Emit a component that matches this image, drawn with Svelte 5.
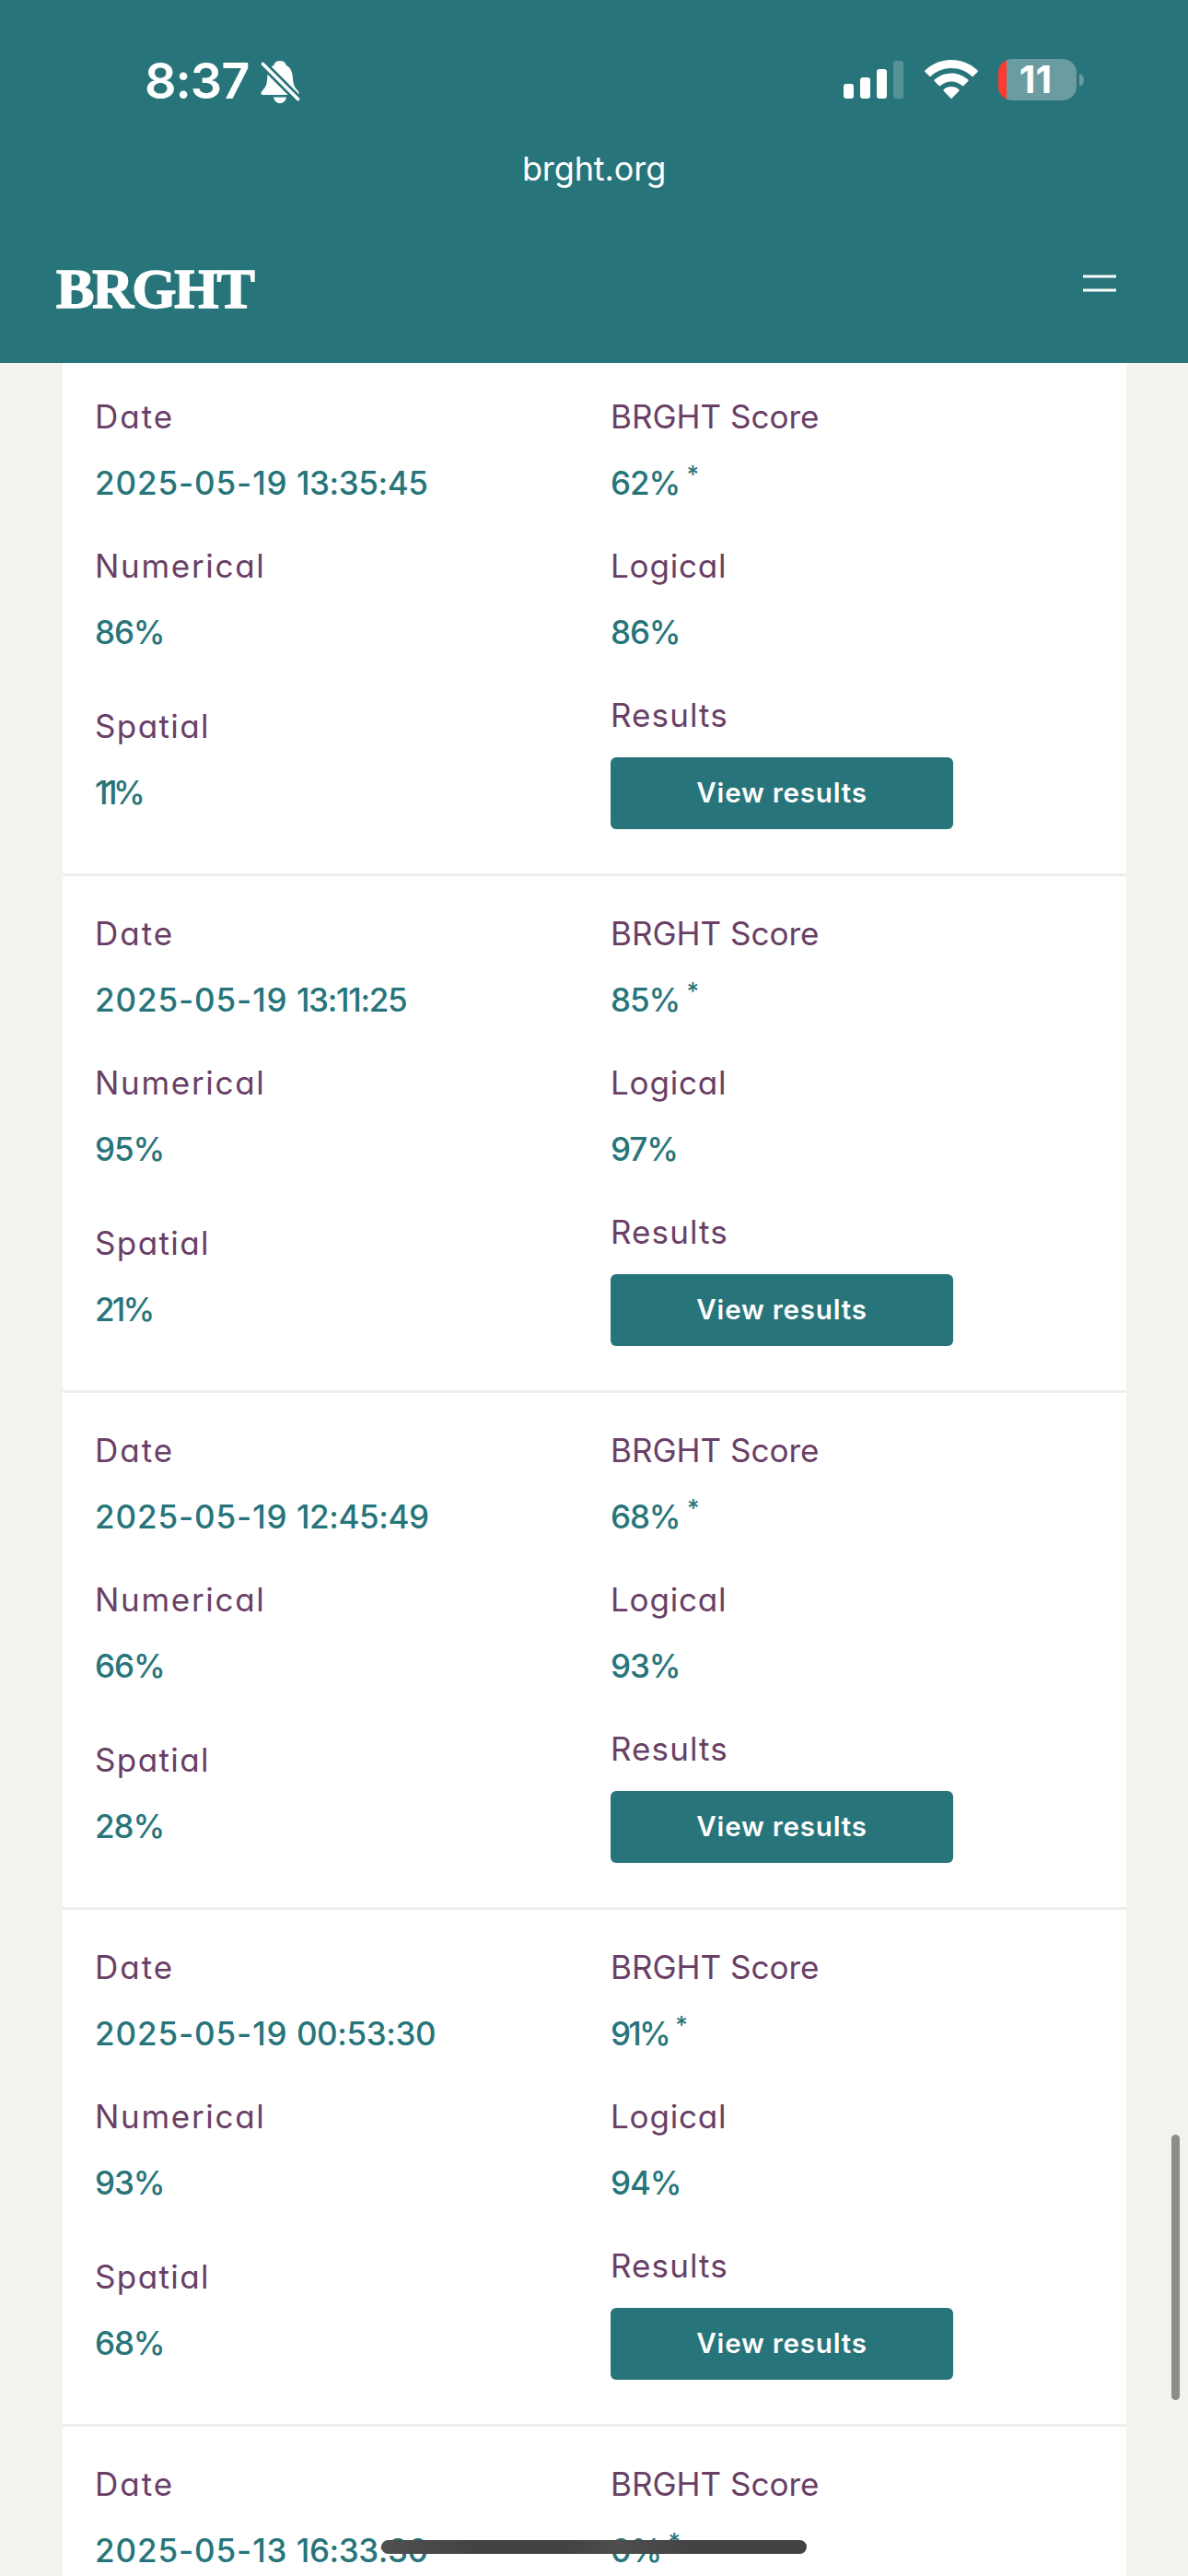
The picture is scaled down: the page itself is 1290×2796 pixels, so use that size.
<script lang="ts">
	const results = [
		{ date: '2025-05-19', time: '13:35:45', score: 62, numerical: 86, logical: 86, spatial: 11 },
		{ date: '2025-05-19', time: '13:11:25', score: 85, numerical: 95, logical: 97, spatial: 21 },
		{ date: '2025-05-19', time: '12:45:49', score: 68, numerical: 66, logical: 93, spatial: 28 },
		{ date: '2025-05-19', time: '00:53:30', score: 91, numerical: 93, logical: 94, spatial: 68 },
		{ date: '2025-05-13', time: '16:33:30', score: 0 }
	];

	const bars = [16, 23, 32, 41];

	// the digit 1 leaves too much air, so pull values that contain it tighter
	function tracking(n: number) {
		const ones = String(n).split('1').length - 1;
		return -1.1 - ones * 1.7;
	}
</script>

{#snippet percent(n)}
	<span style="letter-spacing: {tracking(n)}px">{n}%</span>
{/snippet}

<div class="screen">
	<header class="top">
		<div class="status">
			<div class="status__left">
				<span class="status__time">8:37</span>
				<svg class="bell" width="44" height="48" viewBox="0 0 44 48" aria-hidden="true">
					<path
						fill="#fff"
						d="M21 1c-3.600 0-6 2-6.700 4.700C8.500 8.500 7.500 14 7.200 20c-.3 7-2 10-5 13C-.5 36 .3 38 3 38h36c3 0 3.600-2.500 1-5-3-3-4.700-6-5-13-.3-6-2-11.500-7.300-14.300C27 3 24.600 1 21 1zM14 40.500h14c-.8 4-3.500 6.500-7 6.500s-6.200-2.500-7-6.500z"
					/>
					<path stroke="#27757a" stroke-width="9" d="M-1 1l44 44" />
					<path stroke="#fff" stroke-width="3.600" stroke-linecap="round" d="M2.500 4.500l38 38" />
				</svg>
			</div>
			<div class="status__right">
				<div class="signal">
					{#each bars as height, i}
						<span class="signal__bar" class:dim={i === 3} style="height: {height}px"></span>
					{/each}
				</div>
				<svg class="wifi" width="58" height="43" viewBox="0 0 58 43" aria-hidden="true">
					<g fill="#fff">
						<path d="M29 0C18 0 8 4.200.4 11.500c-.5.500-.5 1 0 1.500l4.800 4.800c.5.500 1.100.500 1.600 0C12.800 12.100 20.500 9 29 9s16.200 3.100 22.200 8.800c.5.500 1.100.5 1.600 0l4.800-4.800c.5-.5.5-1 0-1.500C50 4.200 40 0 29 0z" />
						<path d="M29 14.500c-7 0-13.400 2.700-18.300 7.100-.5.500-.5 1 0 1.500l4.900 4.900c.5.500 1 .5 1.500.1C20.300 25.200 24.500 23.500 29 23.500s8.700 1.700 11.900 4.600c.5.400 1 .4 1.500-.1l4.900-4.900c.5-.5.5-1 0-1.500C42.400 17.200 36 14.500 29 14.500z" />
						<path d="M29 29c-3.200 0-6.100 1.200-8.300 3.200-.5.500-.5 1 0 1.500l7.500 7.900c.5.500 1.100.5 1.600 0l7.500-7.900c.5-.5.5-1 0-1.500C35.100 30.200 32.200 29 29 29z" />
					</g>
				</svg>
				<div class="battery">
					<div class="battery__body">
						<span class="battery__text">11</span>
					</div>
					<svg width="5" height="14" viewBox="0 0 5 14" aria-hidden="true">
						<path fill="#6a9ca1" d="M0 0c3 1 5 3.500 5 7s-2 6-5 7z" />
					</svg>
				</div>
			</div>
		</div>

		<div class="address">brght.org</div>

		<div class="site-bar">
			<a href="/" class="site-bar__logo">BRGHT</a>
			<button class="menu" aria-label="Open menu">
				<svg width="36" height="20" viewBox="0 0 36 20">
					<path stroke="#fff" stroke-width="3" d="M0 3h36M0 18h36" />
				</svg>
			</button>
		</div>
	</header>

	<main class="results">
		{#each results as r}
			<section class="result">
				<div class="cell">
					<span class="label label--date">Date</span>
					<span class="value">
						<span class="day">{r.date}</span>
						<span class="time" class:tight={r.time.includes('11')}>{r.time}</span>
					</span>
				</div>
				<div class="cell">
					<span class="label">BRGHT Score</span>
					<span class="value">{@render percent(r.score)} <sup>*</sup></span>
				</div>
				{#if r.numerical !== undefined}
					<div class="cell">
						<span class="label label--numerical">Numerical</span>
						<span class="value">{@render percent(r.numerical)}</span>
					</div>
					<div class="cell">
						<span class="label label--logical">Logical</span>
						<span class="value">{@render percent(r.logical)}</span>
					</div>
					<div class="cell">
						<span class="label label--spatial">Spatial</span>
						<span class="value">{@render percent(r.spatial)}</span>
					</div>
					<div class="cell">
						<span class="label label--results">Results</span>
						<button class="view">View results</button>
					</div>
				{/if}
			</section>
		{/each}
	</main>

	<div class="scrollbar"></div>
	<div class="home-indicator"></div>
</div>

<style>
	:global(body) {
		background: #f3f2ee;
	}
	.screen {
		position: relative;
		width: 1290px;
		height: 2796px;
		overflow: hidden;
		background: #f3f2ee;
		font-family: Inter, 'Liberation Sans', sans-serif;
	}

	/* Status bar, address and site bar share one teal block */
	.top {
		position: relative;
		z-index: 1;
		height: 394px;
		background: #27757a;
		color: #fff;
	}
	.status {
		display: flex;
		justify-content: space-between;
		box-sizing: border-box;
		height: 152px;
		padding: 64px 113px 0 157px;
	}
	.status__left,
	.status__right {
		display: flex;
		align-items: flex-start;
	}
	.status__time {
		width: 126px;
		font-size: 54px;
		font-weight: 600;
		line-height: 47px;
		letter-spacing: -1px;
	}
	.bell {
		margin-top: 1px;
	}
	.signal {
		display: flex;
		align-items: flex-end;
		gap: 7px;
		height: 43px;
	}
	.signal__bar {
		width: 11px;
		border-radius: 3px;
		background: #fff;
	}
	.signal__bar.dim {
		background: rgba(255, 255, 255, 0.22);
	}
	.wifi {
		margin: 1px 22px 0 23px;
	}
	.battery {
		display: flex;
		align-items: center;
		gap: 3px;
	}
	.battery__body {
		box-sizing: border-box;
		width: 85px;
		height: 45px;
		padding-right: 4px;
		border-radius: 15px;
		background: linear-gradient(to right, #ff3b30 9px, #6a9ca1 9px);
		text-align: center;
	}
	.battery__text {
		font-size: 41px;
		font-weight: 700;
		line-height: 45px;
	}
	.address {
		height: 74px;
		font-size: 36px;
		line-height: 62px;
		letter-spacing: -0.1px;
		text-align: center;
	}
	.site-bar {
		display: flex;
		justify-content: space-between;
		align-items: flex-start;
		padding: 50px 78px 0 61px;
	}
	.site-bar__logo {
		font-family: 'Liberation Serif', serif;
		font-size: 62px;
		font-weight: 700;
		line-height: 74px;
		letter-spacing: -2px;
		color: #fff;
		text-decoration: none;
		-webkit-text-stroke: 1.5px #fff;
	}
	.menu {
		display: flex;
		margin-top: 21px;
		padding: 0;
		border: none;
		background: none;
	}

	.results {
		width: 1155px;
		min-height: 2406px;
		margin: -4px 0 0 68px;
		background: #fff;
	}
	.result {
		display: grid;
		grid-template-columns: 560px 1fr;
		row-gap: 36px;
		align-items: center;
		padding: 35px 35px 49px;
		border-bottom: 3px solid #eee;
	}
	.result:last-child {
		border-bottom: none;
	}
	.cell {
		display: flex;
		flex-direction: column;
		align-items: flex-start;
		gap: 18px;
	}
	.label,
	.value {
		font-size: 35px;
		line-height: 54px;
		white-space: nowrap;
		font-feature-settings: 'cv11';
	}
	.label {
		color: #693f66;
	}
	.label--date {
		letter-spacing: 2px;
	}
	.label--numerical {
		letter-spacing: 1.7px;
	}
	.label--logical {
		letter-spacing: 0.8px;
	}
	.label--spatial {
		letter-spacing: 1.4px;
	}
	.label--results {
		letter-spacing: 1.1px;
	}
	.value {
		color: #27757a;
		font-weight: 500;
	}
	.day {
		letter-spacing: 0.9px;
	}
	.time {
		letter-spacing: -0.4px;
	}
	.time.tight {
		letter-spacing: -1.3px;
	}
	sup {
		font-size: 26px;
		line-height: 0;
		margin-left: -2px;
	}
	.view {
		width: 372px;
		height: 78px;
		margin: 1px 0 -1px;
		padding: 0 0 3px;
		border: none;
		border-radius: 6px;
		background: #27757a;
		color: #fff;
		font-family: inherit;
		font-size: 29.5px;
		font-weight: 600;
		letter-spacing: 0.8px;
	}

	.scrollbar {
		position: absolute;
		top: 2317px;
		right: 9px;
		width: 9px;
		height: 288px;
		border-radius: 5px;
		background: #8d8c89;
	}
	.home-indicator {
		position: absolute;
		z-index: 2;
		bottom: 24px;
		left: 414px;
		width: 462px;
		height: 15px;
		border-radius: 8px;
		background: linear-gradient(to right, #505050, #434343 22%, #434343 44%, #4e4e4e 56%, #434343 72%);
	}
</style>
